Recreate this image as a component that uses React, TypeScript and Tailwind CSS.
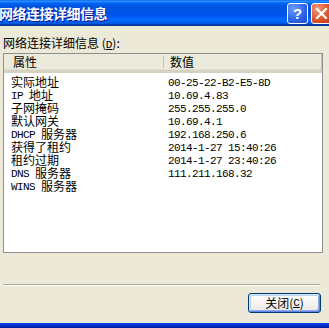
import React from 'react';

const ROWS: [string, string][] = [
  ['实际地址', '00-25-22-B2-E5-8D'],
  ['IP 地址', '10.69.4.83'],
  ['子网掩码', '255.255.255.0'],
  ['默认网关', '10.69.4.1'],
  ['DHCP 服务器', '192.168.250.6'],
  ['获得了租约', '2014-1-27 15:40:26'],
  ['租约过期', '2014-1-27 23:40:26'],
  ['DNS 服务器', '111.211.168.32'],
  ['WINS 服务器', ''],
];

// SimSun-like: latin half width (6px), CJK full width (12px)
function Mixed({ text }: { text: string }) {
  const parts = text.split(/([\x00-\x7f]+)/).filter(Boolean);
  return (
    <>
      {parts.map((p, i) =>
        /^[\x00-\x7f]+$/.test(p) ? (
          <span
            key={i}
            className="block h-[12px] whitespace-pre pt-[2px] font-['Liberation_Mono',monospace] text-[11px] leading-[10px] tracking-[-0.6px]"
          >
            {p}
          </span>
        ) : (
          <span key={i} className="block h-[12px] leading-[12px]">
            {p}
          </span>
        )
      )}
    </>
  );
}

function TitleBar() {
  return (
    <div className="flex h-[26px] shrink-0 items-center justify-between bg-[linear-gradient(180deg,#0058ee_0%,#3593ff_4%,#288eff_6%,#127dff_8%,#036ffc_10%,#0262ee_14%,#0057e5_20%,#0054e3_24%,#0055eb_56%,#005bf5_66%,#026afe_76%,#0062ef_86%,#0052d6_92%,#0040ab_94%,#003092_100%)]">
      <span className="-ml-[1px] text-[14px] font-bold tracking-[-0.5px] text-white [text-shadow:1px_1px_#0f1089]">
        网络连接详细信息
      </span>
      <div className="flex items-center gap-[3px]">
        <div className="flex h-[21px] w-[21px] items-center justify-center rounded-[3px] border border-white bg-[radial-gradient(circle_at_30%_25%,#6e9cfa,#2a62e8_60%,#1c4ed0)]">
          <span className="font-['Liberation_Sans',sans-serif] text-[15px] font-bold leading-none text-white">?</span>
        </div>
        <div className="-mr-[3px] flex h-[21px] w-[21px] items-center justify-center rounded-[3px] border border-white bg-[radial-gradient(circle_at_30%_25%,#f39a7a,#e0542a_55%,#c23a12)]">
          <svg width="13" height="13" viewBox="0 0 13 13">
            <path d="M2 2 L11 11 M11 2 L2 11" stroke="white" strokeWidth="2.2" strokeLinecap="square" />
          </svg>
        </div>
      </div>
    </div>
  );
}

function ListView() {
  return (
    <div className="mx-[3px] flex h-[200px] w-[320px] flex-col border border-[#8e8f8f] bg-white">
      <div className="grid h-[19px] shrink-0 grid-cols-[160px_1fr] border-b-[3px] border-b-[#d6d2c2] bg-[#ebeadb] leading-[16px] shadow-[inset_0_-1px_#e2decd]">
        <div className="relative pl-[9px]">
          属性
          <span className="absolute right-0 top-[2px] h-[12px] w-[1px] bg-[#c7c5b2]" />
        </div>
        <div className="pl-[6px] shadow-[inset_-1px_0_#c7c5b2]">数值</div>
      </div>
      <div className="flex flex-col pt-[2px]">
        {ROWS.map(([k, v]) => (
          <div key={k} className="flex h-[13px] shrink-0 items-center">
            <div className="flex w-[160px] items-center pl-[7px]">
              <Mixed text={k} />
            </div>
            <div className="flex items-center pl-[4px]">
              <Mixed text={v} />
            </div>
          </div>
        ))}
      </div>
    </div>
  );
}

export default function App() {
  return (
    <div className="flex h-[328px] w-[329px] flex-col overflow-hidden bg-[#ece9d8] font-['Noto_Sans_CJK_SC',sans-serif] text-[12px] text-black">
      <TitleBar />
      <div className="flex flex-1 flex-col">
        <div className="ml-[3px] mt-[11px] h-[16px] leading-[12px]">
          网络连接详细信息 (<span className="font-['Liberation_Mono',monospace] text-[11px] underline">D</span>):
        </div>
        <ListView />
        <div className="ml-[3px] mt-[31px] h-[2px] w-[317px] border-t border-t-[#aca899] border-b border-b-white" />
        <div className="mt-[7px] flex justify-end pr-[8px]">
          <button className="flex h-[20px] w-[73px] items-center justify-center rounded-[3px] border border-[#003c74] bg-[linear-gradient(180deg,#ffffff,#ecebe6_86%,#d6d0c5)] leading-none shadow-[inset_1px_1px_#cee7ff,inset_-1px_-1px_#6982ee,inset_2px_2px_#bcd4f6,inset_-2px_-2px_#89ade4]">
            关闭(<span className="font-['Liberation_Mono',monospace] text-[11px] underline">C</span>)
          </button>
        </div>
      </div>
      <div className="h-[5px] shrink-0 bg-[linear-gradient(180deg,#0a4ae0,#0831d9_40%,#001a9a)]" />
    </div>
  );
}
